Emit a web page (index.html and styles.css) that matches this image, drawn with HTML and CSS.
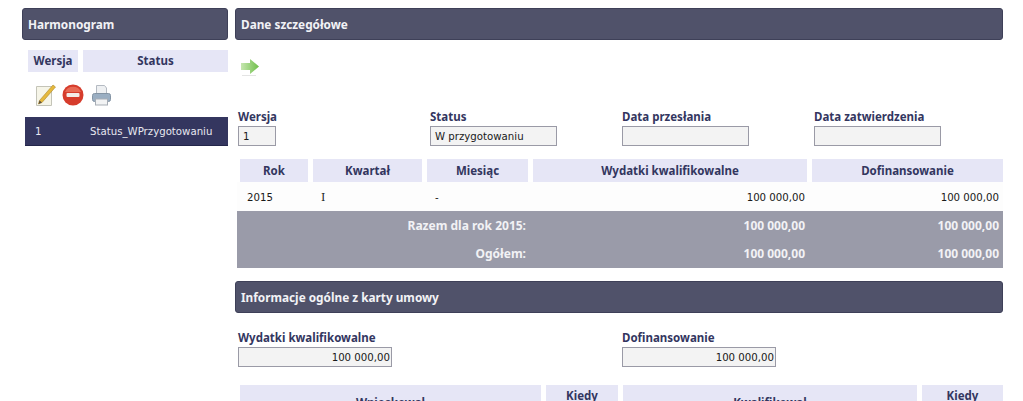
FILE: index.html
```html
<!DOCTYPE html>
<html lang="pl">
<head>
<meta charset="utf-8">
<title>Harmonogram</title>
<link rel="stylesheet" href="styles.css">
</head>
<body>
<div class="page">
  <aside class="side">
    <h2 class="bar">Harmonogram</h2>
    <div class="side-head">
      <div class="head-cell side-w">Wersja</div>
      <div class="head-cell side-s">Status</div>
    </div>
    <div class="tools">
      <svg class="ico-a" width="20" height="22" viewBox="0 0 20 22">
        <path d="M.5 2.500H15.500V21.500H.5Z" fill="#f6f5e8" stroke="#c4c4b8"/>
        <path d="M3.500 16.500L17 1L19.500 3L6 18.500L2.500 20Z" fill="#e6b93c" stroke="#a9882e" stroke-width=".6"/>
        <path d="M2.500 20L3.500 16.500L6 18.500Z" fill="#5c5040"/>
      </svg>
      <svg class="ico-b" width="22" height="22" viewBox="0 0 22 22">
        <circle cx="11" cy="11" r="10.500" fill="#d63c2c"/>
        <path d="M3 8a8.500 8 0 0 1 16 0Z" fill="#e86a55"/>
        <rect x="4.500" y="9" width="13" height="4" rx="1" fill="#f3ece8"/>
      </svg>
      <svg class="ico-c" width="19" height="22" viewBox="0 0 19 22">
        <path d="M4.500 1.500H12.500L14.500 4V10H4.500Z" fill="#eef0f2" stroke="#b4bac2"/>
        <rect x="0.500" y="9.500" width="18" height="8" rx="2" fill="#9aaec2" stroke="#8494a4"/>
        <rect x="3.500" y="15" width="12" height="6" fill="#f2f3f4" stroke="#a7adb5"/>
      </svg>
    </div>
    <div class="side-row"><span class="side-n">1</span><span>Status_WPrzygotowaniu</span></div>
  </aside>
  <main class="main">
    <h2 class="bar">Dane szczegółowe</h2>
    <div class="arrow-row">
      <svg width="20" height="20" viewBox="0 0 20 20">
        <defs>
          <linearGradient id="arrowFill" x1="0" y1="0" x2="1" y2="0">
            <stop offset="0" stop-color="#c6e6b0"/>
            <stop offset="1" stop-color="#6fbf4a"/>
          </linearGradient>
        </defs>
        <path d="M1 6H10V2L19 9.500L10 17V13H1Z" fill="url(#arrowFill)"/>
        <rect x="2" y="18" width="14" height="1" fill="#e4e4e4"/>
      </svg>
    </div>
    <div class="fields">
      <div class="field"><label class="lab">Wersja</label><div class="box w-s">1</div></div>
      <div class="field"><label class="lab">Status</label><div class="box w-m">W przygotowaniu</div></div>
      <div class="field"><label class="lab">Data przesłania</label><div class="box w-m"></div></div>
      <div class="field"><label class="lab">Data zatwierdzenia</label><div class="box w-m"></div></div>
    </div>
    <div class="grid head-row">
      <div class="head-cell">Rok</div>
      <div class="head-cell">Kwartał</div>
      <div class="head-cell">Miesiąc</div>
      <div class="head-cell">Wydatki kwalifikowalne</div>
      <div class="head-cell">Dofinansowanie</div>
    </div>
    <div class="data-row">
      <span class="d-rok">2015</span><span class="d-kw">I</span><span class="d-m">-</span>
      <span class="d-a">100 000,00</span><span class="d-b">100 000,00</span>
    </div>
    <div class="totals">
      <div class="total-row"><span class="t-l">Razem dla rok 2015:</span><span class="t-a">100 000,00</span><span class="t-b">100 000,00</span></div>
      <div class="total-row"><span class="t-l">Ogółem:</span><span class="t-a">100 000,00</span><span class="t-b">100 000,00</span></div>
    </div>
    <h2 class="bar bar-2">Informacje ogólne z karty umowy</h2>
    <div class="fields2">
      <div class="field2"><label class="lab">Wydatki kwalifikowalne</label><div class="box w-l num">100 000,00</div></div>
      <div class="field2"><label class="lab">Dofinansowanie</label><div class="box w-l num">100 000,00</div></div>
    </div>
    <div class="grid2">
      <div class="head-cell tall">Wnioskował</div>
      <div class="head-cell tall">Kiedy<br>podpisał</div>
      <div class="head-cell tall">Kwalifikował</div>
      <div class="head-cell tall">Kiedy<br>podpisał</div>
    </div>
  </main>
</div>
</body>
</html>
```
FILE: styles.css
```css
html, body { margin: 0; padding: 0; height: 401px; overflow: hidden; background: #fff; }
body { font-family: "DejaVu Sans", Verdana, sans-serif; font-size: 10.2px; color: #1a1a1a; }
.page { display: flex; gap: 7px; padding: 8px 20px 0 22px; }
.side { width: 206px; flex: none; }
.main { width: 768px; flex: none; }
.bar { margin: 0; height: 32px; box-sizing: border-box; padding: 0 6px 0 5px; display: flex; align-items: center;
  background: #50526a; border: 1px solid #3e4058; border-radius: 3px; color: #f2f2f6;
  font-family: "Noto Sans", sans-serif; font-size: 11.8px; font-weight: bold; }
.head-cell { background: #e6e6f6; color: #33365f; font-family: "Noto Sans", sans-serif; font-weight: bold; font-size: 11.5px; line-height: 14px; display: flex; align-items: center; justify-content: center; text-align: center; height: 23px; }
.side-head { display: flex; gap: 5px; margin: 10px 0 0 6px; }
.side-head .head-cell { height: 22px; }
.side-w { width: 50px; }
.side-s { width: 145px; }
.tools { display: flex; align-items: center; margin: 12px 0 0 14px; height: 22px; }
.ico-b { margin-left: 6px; }
.ico-c { margin-left: 8px; }
.side-row { display: flex; margin: 11px 0 0 3px; height: 29px; align-items: center; background: #34365f; border-bottom: 1px solid #23264a; color: #e8e8f0; padding-left: 10px; box-sizing: border-box; }
.side-n { width: 55px; }
.arrow-row { height: 20px; margin: 17px 0 0 5px; }
.fields { display: flex; margin: 33px 0 0 3px; }
.field { width: 192px; flex: none; }
.lab { display: block; color: #33365f; font-family: "Noto Sans", sans-serif; font-weight: bold; font-size: 11.5px; line-height: 14px; }
.box { margin-top: 2px; height: 20px; box-sizing: border-box; border: 1px solid #9a9aa6; background: #f3f3f3; padding: 0 4px; display: flex; align-items: center; color: #1a1a1a; }
.w-s { width: 38px; }
.w-m { width: 127px; }
.w-l { width: 154px; }
.num { justify-content: flex-end; padding-right: 1px; }
.grid { display: grid; grid-template-columns: 68px 109px 101px 274px 191px; gap: 5px; margin: 13px 0 0 5px; }
.data-row { display: flex; height: 29px; box-sizing: border-box; padding-top: 1px; align-items: center; margin-left: 2px; background: #fdfdfd; }
.d-rok { width: 75px; padding-left: 10px; box-sizing: border-box; }
.d-kw { width: 115px; padding-left: 9px; box-sizing: border-box; font-family: "DejaVu Serif", serif; font-size: 11px; }
.d-m { width: 90px; padding-left: 8px; box-sizing: border-box; }
.d-a { width: 288px; text-align: right; }
.d-b { width: 194px; text-align: right; }
.totals { margin-left: 2px; background: #9a9ba9; color: #f2f2f5; font-family: "Noto Sans", sans-serif; font-weight: bold; font-size: 12px; }
.total-row { display: flex; height: 28.500px; align-items: center; }
.t-l { width: 289px; text-align: right; flex: none; }
.t-a { width: 279px; text-align: right; flex: none; }
.t-b { width: 194px; text-align: right; flex: none; }
.bar-2 { margin-top: 13px; }
.fields2 { display: flex; margin: 18px 0 0 3px; }
.field2 { width: 384px; flex: none; }
.grid2 { display: grid; grid-template-columns: 301px 72px 294px 81px; gap: 5px; margin: 18px 0 0 5px; }
.tall { height: 36px; }
```
